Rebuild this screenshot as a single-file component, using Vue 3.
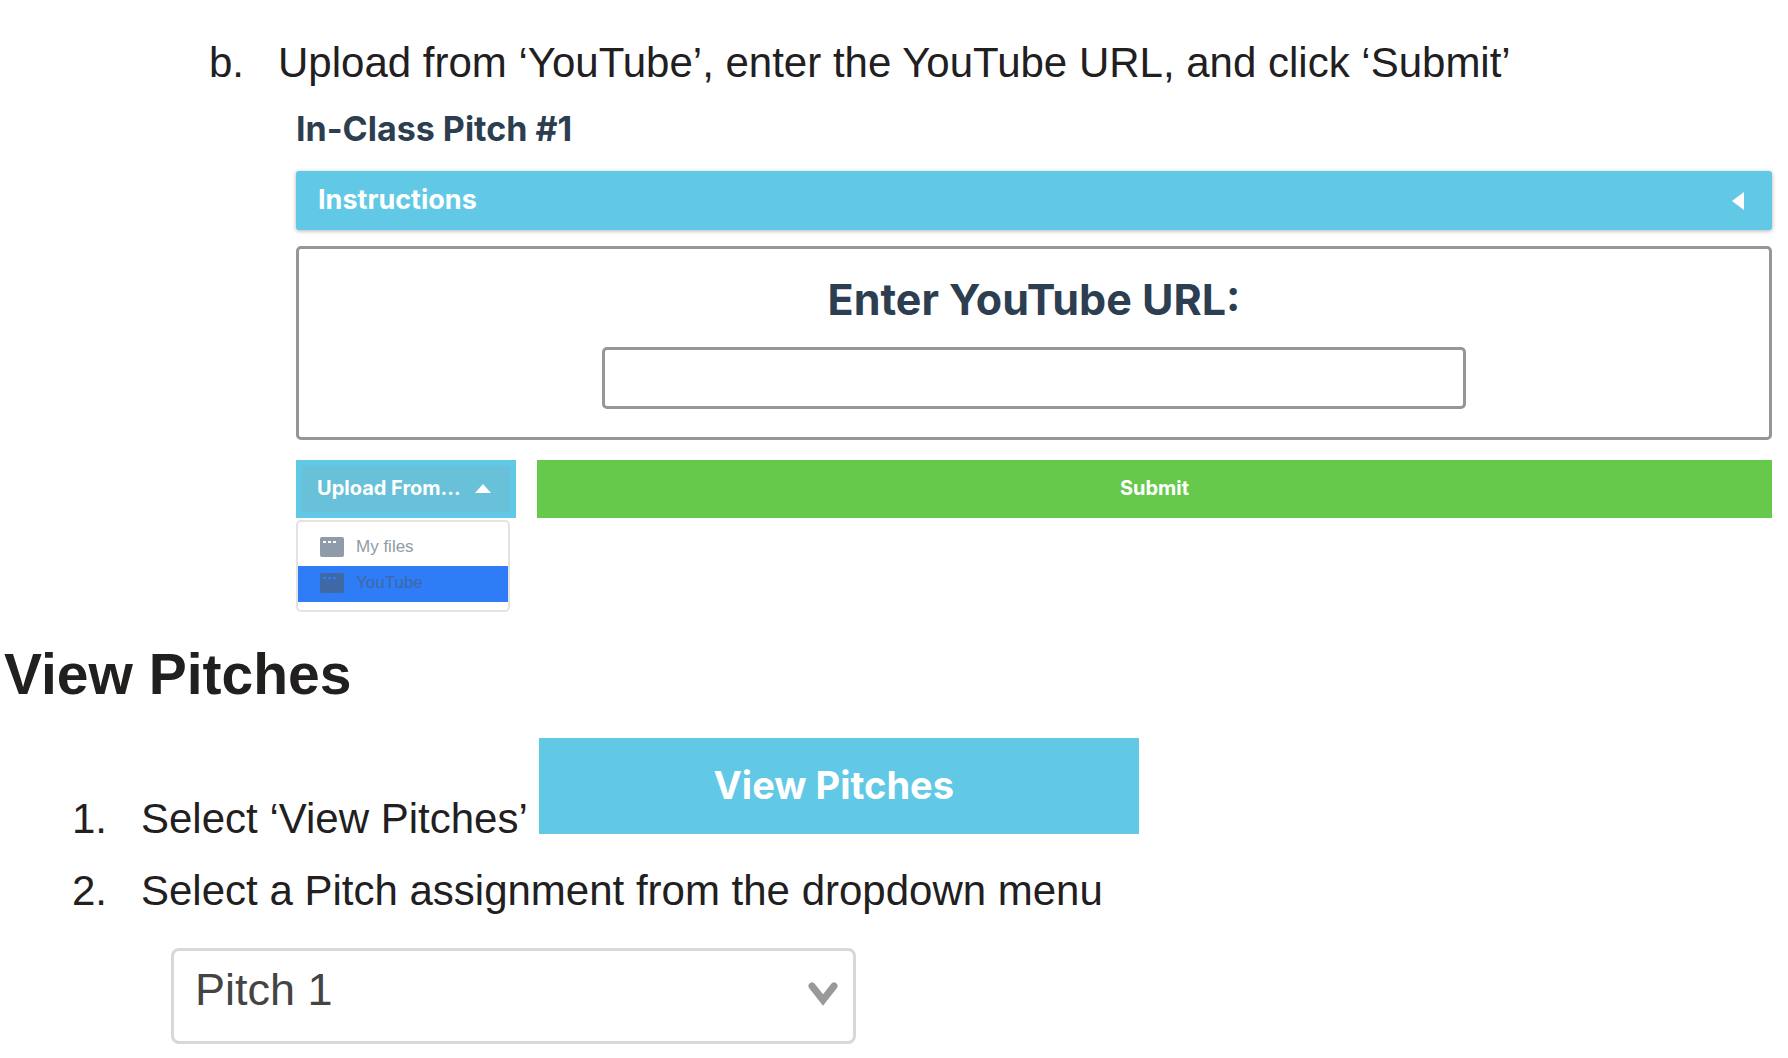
<script setup>
import { ref } from 'vue'

const url = ref('')
const pitch = ref('Pitch 1')
const source = ref('YouTube')
const sources = ['My files', 'YouTube']
</script>

<template>
  <main class="guide">
    <section class="upload-step">
      <p class="step sub-step"><span class="marker">b.</span><span>Upload from ‘YouTube’, enter the YouTube URL, and click ‘Submit’</span></p>

      <form class="assignment" @submit.prevent>
        <h2 class="assignment-title">In-Class Pitch #1</h2>
        <button type="button" class="instructions">
          <span>Instructions</span>
          <svg width="12" height="18" viewBox="0 0 12 18" aria-hidden="true"><path d="M12 0V18L0 9Z" fill="#fff" /></svg>
        </button>
        <div class="url-panel">
          <label for="url" class="url-label">Enter YouTube URL:</label>
          <input id="url" v-model="url" type="text" class="url-input" />
        </div>
        <div class="actions">
          <div class="upload">
            <button type="button" class="upload-button" aria-expanded="true">
              <span>Upload From...</span>
              <svg width="16" height="9" viewBox="0 0 16 9" aria-hidden="true"><path d="M0 9L8 0L16 9Z" fill="#fff" /></svg>
            </button>
            <div class="menu">
              <button
                v-for="item in sources"
                :key="item"
                type="button"
                class="menu-item"
                :class="{ active: item === source }"
                @click="source = item"
              >
                <svg width="24" height="20" viewBox="0 0 24 20" aria-hidden="true">
                  <path fill="currentColor" fill-rule="evenodd" d="M2 0H22Q24 0 24 2V18Q24 20 22 20H2Q0 20 0 18V2Q0 0 2 0ZM3 4V6H6V4ZM8 4V6H11V4ZM13 4V6H16V4Z" />
                </svg>
                <span>{{ item }}</span>
              </button>
            </div>
          </div>
          <button type="submit" class="submit">Submit</button>
        </div>
      </form>
    </section>

    <section>
      <h1 class="heading">View Pitches</h1>
      <div class="step main-step with-button">
        <span class="marker">1.</span><span>Select ‘View Pitches’</span>
        <button type="button" class="view-button">View Pitches</button>
      </div>
      <p class="step main-step"><span class="marker">2.</span><label for="pitch">Select a Pitch assignment from the dropdown menu</label></p>
      <div class="select-wrap">
        <select id="pitch" v-model="pitch" class="pitch-select">
          <option>Pitch 1</option>
        </select>
        <svg class="chevron" width="30" height="24" viewBox="0 0 30 24" aria-hidden="true">
          <path d="M4 4L15 18L26 4" fill="none" stroke="#999" stroke-width="7" stroke-linecap="round" />
        </svg>
      </div>
    </section>
  </main>
</template>

<style>
body {
  margin: 0;
  background: #fff;
}
</style>

<style scoped>
.guide {
  padding: 39px 16px 14px 0;
  color: #21201f;
  font-family: "Liberation Sans", Arial, sans-serif;
}

button {
  margin: 0;
  padding: 0;
  border: 0;
  color: #fff;
  font-family: Inter, Roboto, sans-serif;
  font-weight: 700;
}

svg {
  display: block;
  flex: none;
}

.step {
  display: flex;
  margin: 0;
  font-size: 42px;
  line-height: 48px;
}

.sub-step {
  padding-left: 209px;
}

.main-step {
  padding-left: 72px;
}

.marker {
  flex: none;
  width: 69px;
}

.assignment {
  margin: 20px 0 0 296px;
}

.assignment-title {
  margin: 0;
  color: #2c3e50;
  font: 700 34px/44px Inter, sans-serif;
}

.instructions {
  display: flex;
  align-items: center;
  justify-content: space-between;
  width: 100%;
  height: 59px;
  margin-top: 20px;
  padding: 0 28px 0 22px;
  border-radius: 3px;
  background: #61c9e5;
  box-shadow: 0 1px 4px rgba(0, 0, 0, 0.3);
  font-size: 27px;
}

.instructions span {
  padding-bottom: 2px;
}

.url-panel {
  display: flex;
  flex-direction: column;
  align-items: center;
  gap: 24px;
  margin-top: 16px;
  padding: 26px 24px 28px;
  border: 3px solid #969696;
  border-radius: 5px;
}

.url-label {
  color: #2c3e50;
  font: 700 43px/48px Inter, sans-serif;
}

.url-input {
  box-sizing: border-box;
  width: 100%;
  max-width: 864px;
  height: 62px;
  padding: 0 16px;
  border: 3px solid #969696;
  border-radius: 5px;
  background: #fff;
  font-size: 28px;
}

.actions {
  display: flex;
  align-items: flex-start;
  gap: 21px;
  margin-top: 20px;
}

.upload {
  flex: none;
  width: 220px;
}

.upload-button {
  display: flex;
  align-items: center;
  gap: 14px;
  width: 100%;
  height: 58px;
  padding: 0 0 2px 15px;
  border: 6px solid #61c9e5;
  background: #68c1d8;
  font-size: 20px;
}

.menu {
  box-sizing: border-box;
  width: 214px;
  margin-top: 2px;
  padding: 8px 0;
  border: 2px solid #e3e3e3;
  border-radius: 5px;
}

.menu-item {
  display: flex;
  align-items: center;
  gap: 12px;
  width: 100%;
  height: 36px;
  padding: 0 0 2px 22px;
  background: #fff;
  color: #8f9ba8;
  font: 400 17px/20px "Liberation Sans", Arial, sans-serif;
}

.menu-item.active {
  background: #2e7cf6;
  color: #3f69a4;
}

.submit {
  flex: 1;
  height: 58px;
  padding-bottom: 2px;
  background: #67c94c;
  font-size: 20px;
}

.heading {
  margin: 28px 0 0 4px;
  font-size: 57px;
  line-height: 68px;
}

.with-button {
  align-items: flex-end;
  margin-top: 30px;
}

.view-button {
  width: 600px;
  height: 96px;
  margin: 0 0 9px 11px;
  padding: 0 10px 3px 0;
  background: #61c9e5;
  font-size: 38px;
}

.with-button + .step {
  margin-top: 24px;
}

.select-wrap {
  position: relative;
  width: 685px;
  margin: 33px 0 0 171px;
}

.pitch-select {
  display: block;
  box-sizing: border-box;
  width: 100%;
  height: 96px;
  padding: 0 72px 13px 21px;
  border: 3px solid #d8d8d8;
  border-radius: 8px;
  appearance: none;
  background: #fff;
  color: #444;
  font: 400 45px/52px "Liberation Sans", Arial, sans-serif;
}

.chevron {
  position: absolute;
  top: 34px;
  right: 18px;
  pointer-events: none;
}
</style>
